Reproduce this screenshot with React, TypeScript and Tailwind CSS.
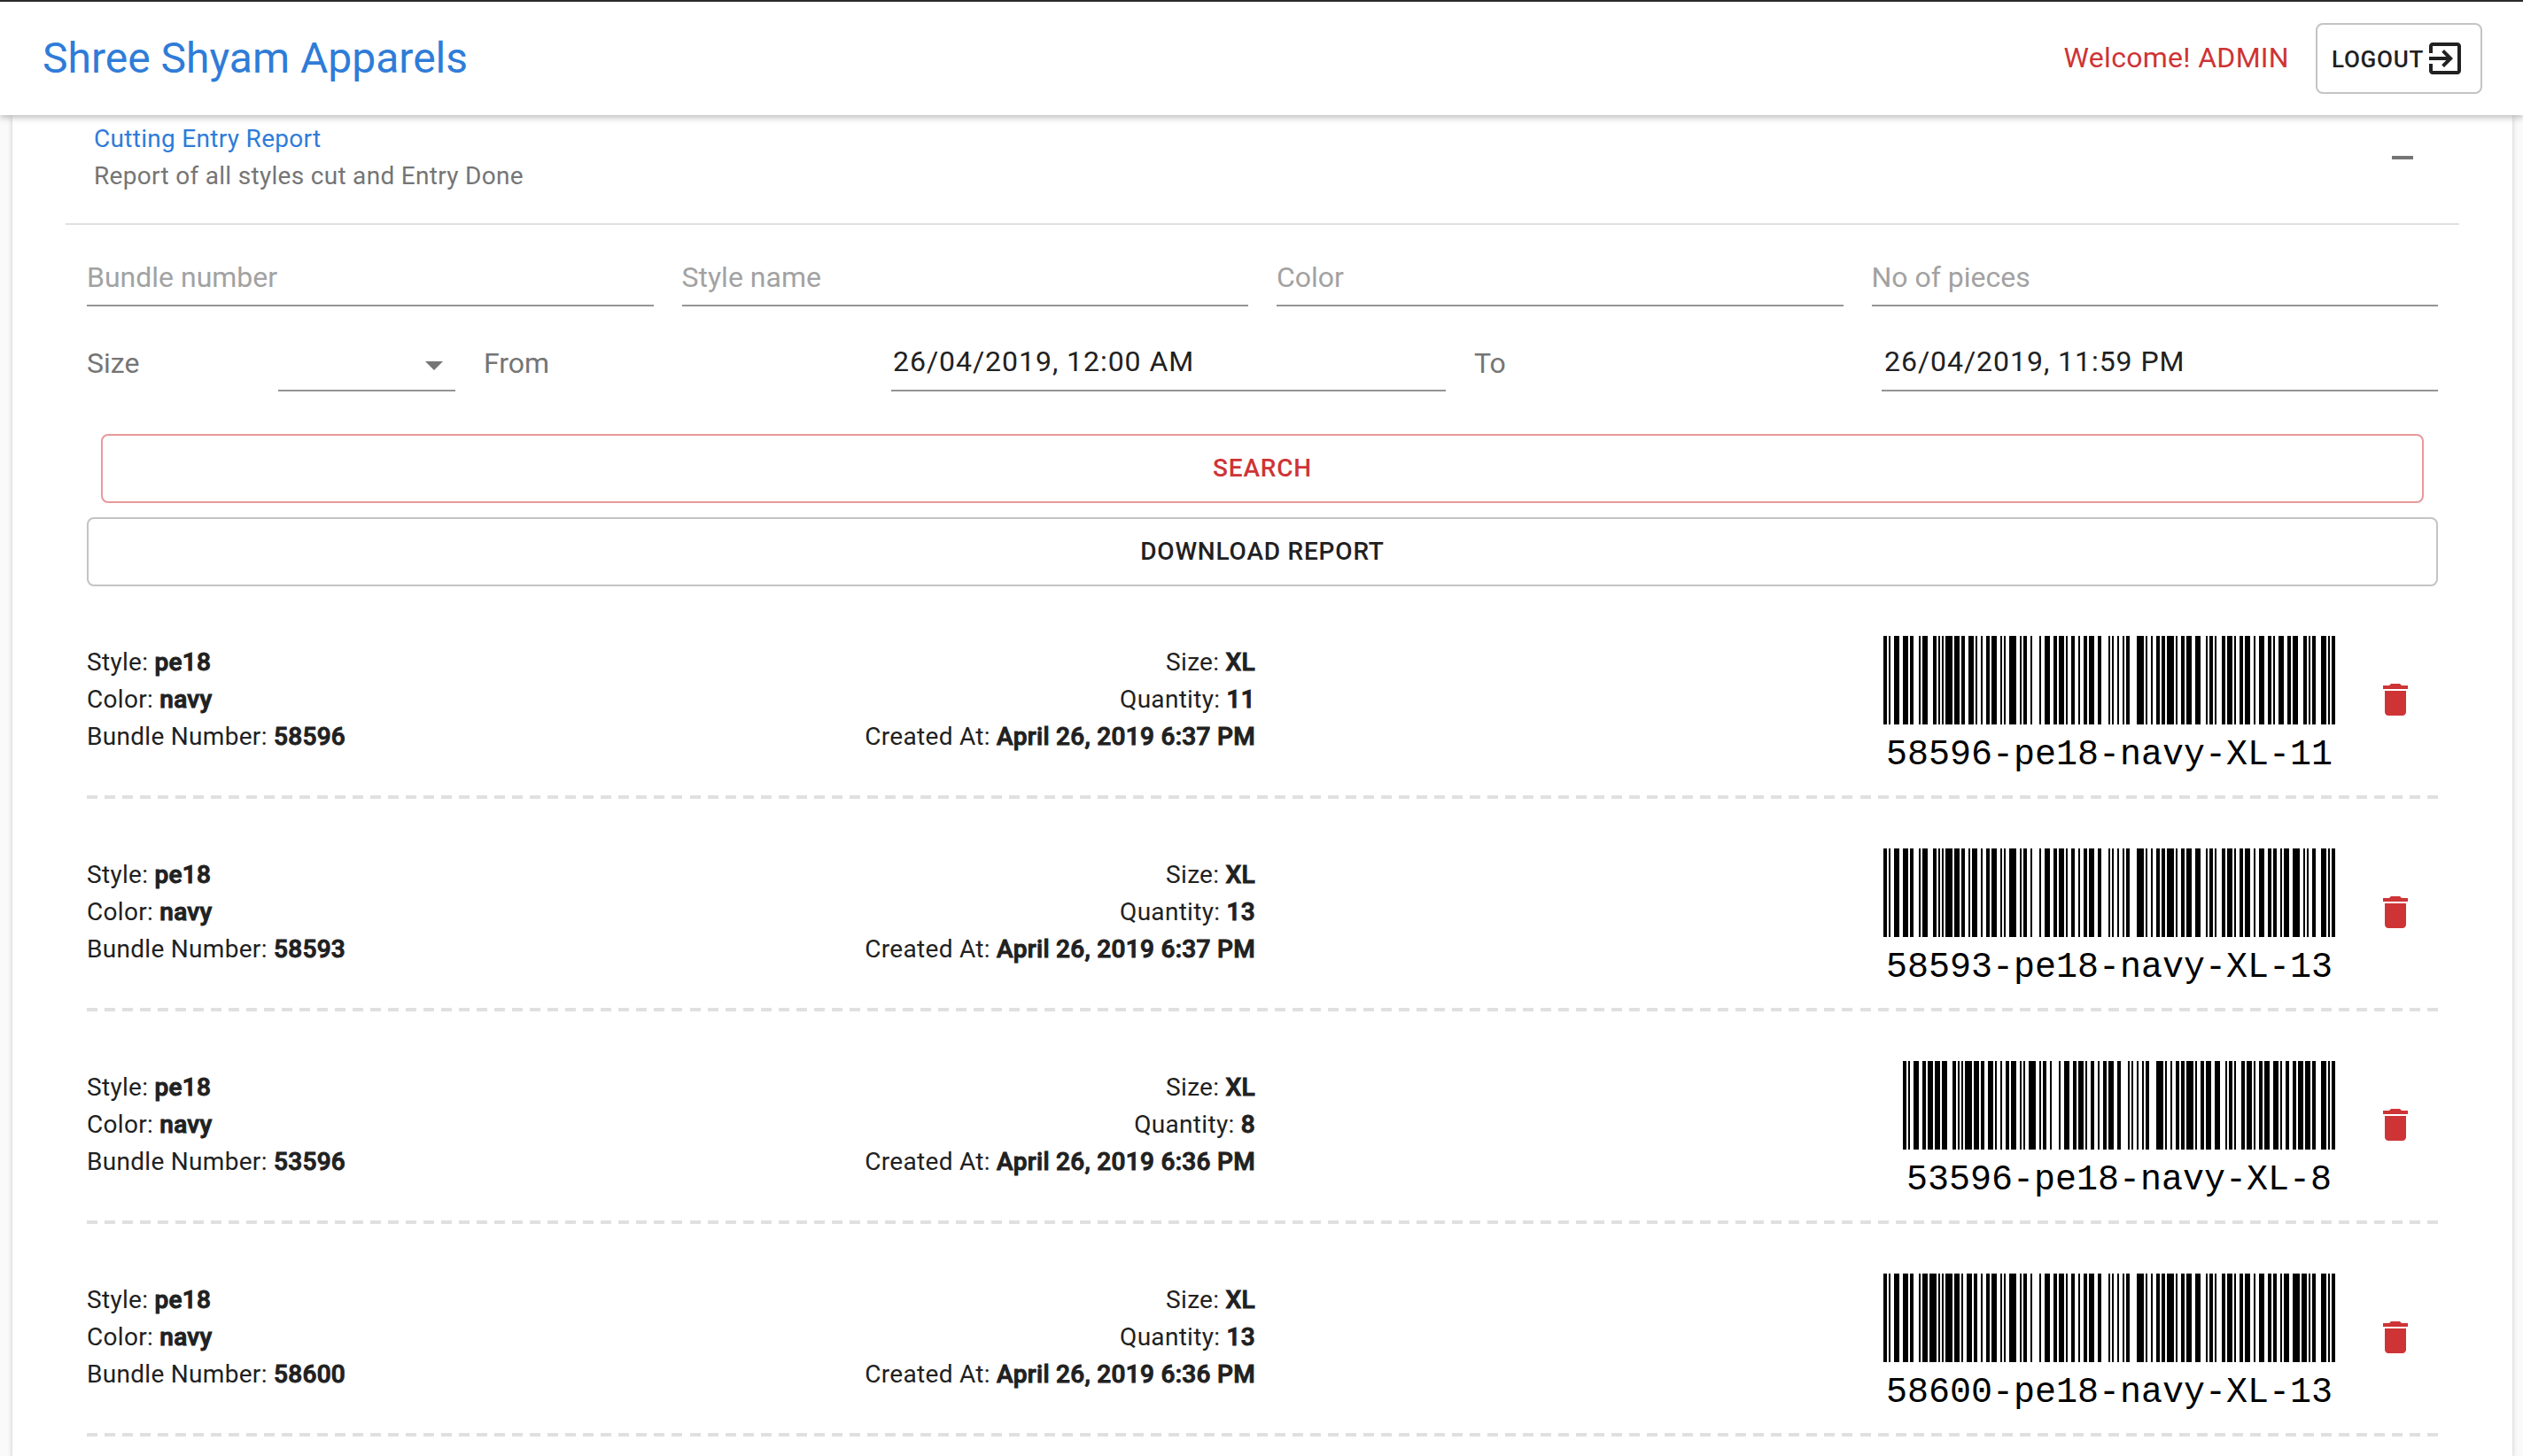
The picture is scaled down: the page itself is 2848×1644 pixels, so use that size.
import React from "react";

// Code 128 symbol widths, indexed by symbol value (bar, space, bar, ...).
const CODE128 = (
  "212222 222122 222221 121223 121322 131222 122213 122312 132212 221213 221312 231212 112232 122132 122231 113222 " +
  "123122 123221 223211 221132 221231 213212 223112 312131 311222 321122 321221 312212 322112 322211 212123 212321 " +
  "232121 111323 131123 131321 112313 132113 132311 211313 231113 231311 112133 112331 132131 113123 113321 133121 " +
  "313121 211331 231131 213113 213311 213131 311123 311321 331121 312113 312311 332111 314111 221411 431111 111224 " +
  "111422 121124 121421 141122 141221 112214 112412 122114 122411 142112 142211 241211 221114 413111 241112 134111 " +
  "111242 121142 121241 114212 124112 124211 411212 421112 421211 212141 214121 412121 111143 111341 131141 114113 " +
  "114311 411113 411311 113141 114131 311141 411131 211412 211214 211232 2331112"
).split(" ");

const START_C = 105;
const CODE_B = 100;
const STOP = 106;

function encode(text: string): number[] {
  const symbols = [START_C];
  let i = 0;
  while (/^\d\d/.test(text.slice(i))) {
    symbols.push(Number(text.slice(i, i + 2)));
    i += 2;
  }
  symbols.push(CODE_B);
  for (; i < text.length; i++) symbols.push(text.charCodeAt(i) - 32);
  const sum = symbols.reduce((acc, s, n) => acc + s * Math.max(n, 1), 0);
  symbols.push(sum % 103, STOP);
  return symbols.flatMap((s) => CODE128[s].split("").map(Number));
}

function Barcode({ value }: { value: string }) {
  const bars: { x: number; w: number }[] = [];
  let x = 0;
  encode(value).forEach((w, n) => {
    if (n % 2 === 0) bars.push({ x, w });
    x += w;
  });
  return (
    <div className="flex flex-col items-center text-black">
      <svg width={x * 2} height={100} viewBox={`0 0 ${x} 50`} shapeRendering="crispEdges">
        {bars.map((b) => (
          <rect key={b.x} x={b.x} y={0} width={b.w} height={50} />
        ))}
      </svg>
      <div className="mt-[11px] whitespace-pre font-['Liberation_Mono',monospace] text-[40px] leading-[48px]">
        {value}
      </div>
    </div>
  );
}

function Icon({ d, className }: { d: string; className?: string }) {
  return (
    <svg viewBox="0 0 24 24" fill="currentColor" className={`size-12 shrink-0 ${className ?? ""}`}>
      <path d={d} />
    </svg>
  );
}

const EXIT =
  "M10.09 15.59L11.5 17l5-5-5-5-1.41 1.41L12.67 11H3v2h9.67l-2.58 2.59zM19 3H5c-1.11 0-2 .9-2 2v4h2V5h14v14H5v-4H3v4c0 1.1.89 2 2 2h14c1.1 0 2-.9 2-2V5c0-1.1-.9-2-2-2z";
const TRASH = "M6 19c0 1.1.9 2 2 2h8c1.1 0 2-.9 2-2V7H6v12zM19 4h-3.5l-1-1h-5l-1 1H5v2h14V4z";

const rows = [
  { bundle: "58596", qty: "11", at: "April 26, 2019 6:37 PM" },
  { bundle: "58593", qty: "13", at: "April 26, 2019 6:37 PM" },
  { bundle: "53596", qty: "8", at: "April 26, 2019 6:36 PM" },
  { bundle: "58600", qty: "13", at: "April 26, 2019 6:36 PM" },
];

function Line({ label, value }: { label: string; value: string }) {
  return (
    <p>
      {label}: <b className="font-medium [-webkit-text-stroke:1px_currentColor]">{value}</b>
    </p>
  );
}

function Row({ bundle, qty, at }: { bundle: string; qty: string; at: string }) {
  return (
    <div className="flex h-[240px] flex-col">
      <div className="flex h-[236px] items-start text-[28px] leading-[42px] tracking-[0.01071em]">
        <div className="w-[600px] pt-[65px]">
          <Line label="Style" value="pe18" />
          <Line label="Color" value="navy" />
          <Line label="Bundle Number" value={bundle} />
        </div>
        <div className="w-[719px] pt-[65px] text-right">
          <Line label="Size" value="XL" />
          <Line label="Quantity" value={qty} />
          <Line label="Created At" value={at} />
        </div>
        <div className="ml-auto pt-14 tracking-normal">
          <Barcode value={`${bundle}-pe18-navy-XL-${qty}`} />
        </div>
        <Icon d={TRASH} className="mr-6 ml-11 mt-[104px] text-[#ce3436]" />
      </div>
      <div className="h-1 bg-[repeating-linear-gradient(90deg,#e0e0e0_0px,#e0e0e0_12px,transparent_12px,transparent_20.015px)]" />
    </div>
  );
}

export default function App() {
  return (
    <div className="flex h-[1644px] w-[2848px] flex-col overflow-hidden bg-[#fafafa] font-['Roboto',sans-serif] text-[#212121]">
      <header className="relative z-10 flex h-[130px] shrink-0 items-center border-t-2 border-[#2b2b2d] bg-white pr-[46px] pl-12 shadow-[0_2px_8px_rgba(0,0,0,0.3)]">
        <h1 className="text-[48px] leading-[64px] text-[#2f7cd8]">Shree Shyam Apparels</h1>
        <span className="ml-auto pb-0.5 text-[32px] leading-[48px] tracking-[0.00938em] text-[#ce3436]">Welcome! ADMIN</span>
        <button className="ml-[30px] flex h-20 w-[188px] items-center rounded-lg border-2 border-[#c4c4c4] pl-4 text-[26px] font-medium tracking-[0.02857em]">
          <span className="pt-0.5">LOGOUT</span>
          <Icon d={EXIT} />
        </button>
      </header>

      <main className="mr-3 ml-3.5 flex-1 bg-white px-[60px] shadow-[0_2px_6px_rgba(0,0,0,0.2)]">
        <div className="flex h-[124px] items-start justify-between border-b-2 border-[#e0e0e0] pr-10 pl-8">
          <div className="pt-1.5 text-[28px] leading-[42px] tracking-[0.01071em]">
            <p className="text-[#2f7cd8]">Cutting Entry Report</p>
            <p className="text-[#757575]">Report of all styles cut and Entry Done</p>
          </div>
          <Icon d="M6 11h12v2H6z" className="mt-6 text-[#757575]" />
        </div>

        <div className="px-6">
          <div className="grid h-[92px] grid-cols-4 gap-8 text-[32px] text-[#a2a2a2]">
            {["Bundle number", "Style name", "Color", "No of pieces"].map((t) => (
              <div key={t} className="border-b-2 border-[#949494] pt-[39px] leading-[40px]">
                {t}
              </div>
            ))}
          </div>

          <div className="flex h-24 gap-8 text-[32px] leading-[40px]">
            <div className="flex w-[416px] justify-between">
              <span className="pt-11 text-[#757575]">Size</span>
              <div className="flex w-[200px] items-start justify-end border-b-2 border-[#949494] pt-[42px]">
                <Icon d="M7 10l5 5 5-5z" className="text-[#757575]" />
              </div>
            </div>
            <div className="flex w-[1086px] justify-between">
              <span className="pt-11 text-[#757575]">From</span>
              <div className="w-[626px] border-b-2 border-[#949494] pt-[42px] pl-0.5 tracking-[0.03em]">26/04/2019, 12:00 AM</div>
            </div>
            <div className="flex flex-1 justify-between">
              <span className="pt-11 text-[#757575]">To</span>
              <div className="w-[628px] border-b-2 border-[#949494] pt-[42px] pl-[3px] tracking-[0.03em]">26/04/2019, 11:59 PM</div>
            </div>
          </div>

          <div className="flex flex-col gap-4 pt-12 text-[28px] font-medium tracking-[0.02857em]">
            <button className="mx-4 h-[78px] rounded-lg border-2 border-[#e8999b] text-[#ce3436]">SEARCH</button>
            <button className="h-[78px] rounded-lg border-2 border-[#c4c4c4]">DOWNLOAD REPORT</button>
          </div>

          {rows.map((r) => (
            <Row key={r.bundle} {...r} />
          ))}
        </div>
      </main>
    </div>
  );
}
